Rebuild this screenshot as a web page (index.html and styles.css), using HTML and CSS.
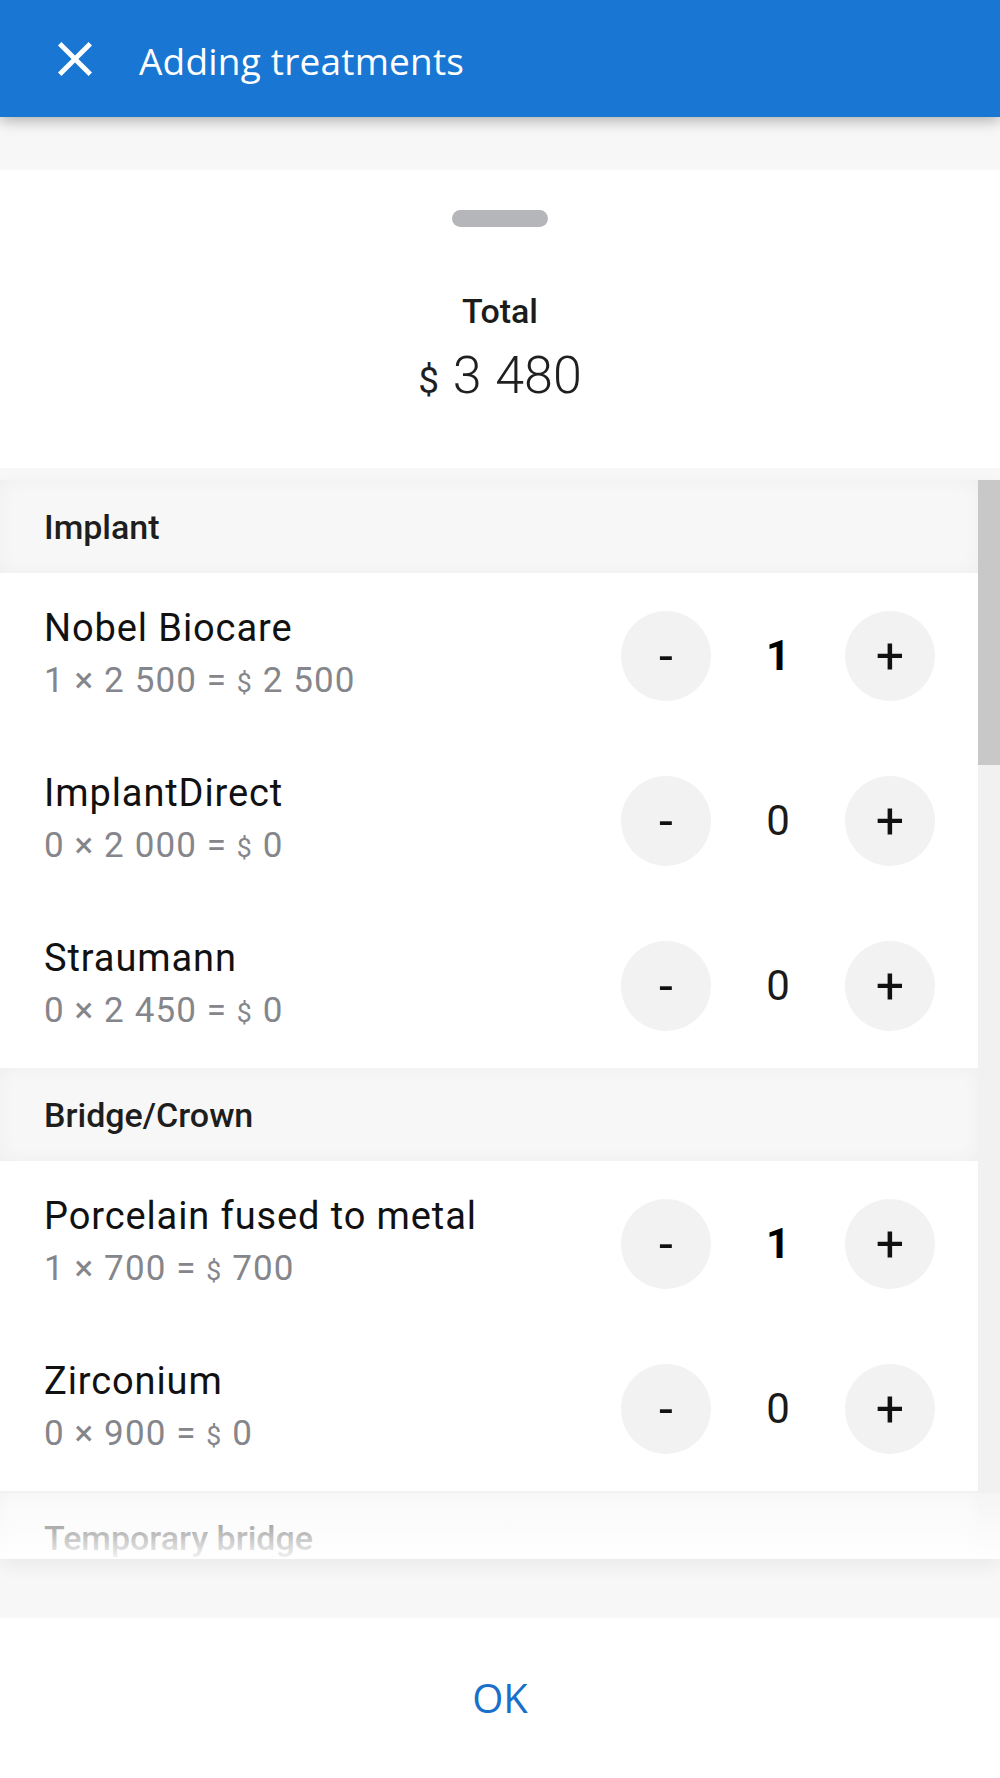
FILE: index.html
```html
<!DOCTYPE html>
<html lang="en">
<head>
<meta charset="utf-8">
<title>Adding treatments</title>
<link rel="stylesheet" href="styles.css">
</head>
<body>
<div class="app">
  <header class="topbar">
    <button class="close" aria-label="Close">
      <svg viewBox="5 5 14 14" width="34" height="34"><path fill="#fff" d="M19 6.41L17.59 5 12 10.59 6.41 5 5 6.41 10.59 12 5 17.59 6.41 19 12 13.41 17.59 19 19 17.59 13.41 12z"/></svg>
    </button>
    <h1 class="title">Adding treatments</h1>
  </header>

  <main class="content">
    <section class="sheet">
      <div class="handle"></div>
      <div class="total-label">Total</div>
      <div class="total-amount"><span class="cur">$</span> 3 480</div>
    </section>

    <div class="list-wrap">
      <div class="list">
        <div class="group-title">Implant</div>
        <div class="row">
          <div class="info">
            <div class="name">Nobel Biocare</div>
            <div class="calc">1 × 2 500 = <span class="cur">$</span> 2 500</div>
          </div>
          <div class="stepper">
            <button class="step">-</button>
            <span class="count active">1</span>
            <button class="step">+</button>
          </div>
        </div>
        <div class="row">
          <div class="info">
            <div class="name">ImplantDirect</div>
            <div class="calc">0 × 2 000 = <span class="cur">$</span> 0</div>
          </div>
          <div class="stepper">
            <button class="step">-</button>
            <span class="count">0</span>
            <button class="step">+</button>
          </div>
        </div>
        <div class="row">
          <div class="info">
            <div class="name">Straumann</div>
            <div class="calc">0 × 2 450 = <span class="cur">$</span> 0</div>
          </div>
          <div class="stepper">
            <button class="step">-</button>
            <span class="count">0</span>
            <button class="step">+</button>
          </div>
        </div>

        <div class="group-title">Bridge/Crown</div>
        <div class="row">
          <div class="info">
            <div class="name">Porcelain fused to metal</div>
            <div class="calc">1 × 700 = <span class="cur">$</span> 700</div>
          </div>
          <div class="stepper">
            <button class="step">-</button>
            <span class="count active">1</span>
            <button class="step">+</button>
          </div>
        </div>
        <div class="row">
          <div class="info">
            <div class="name">Zirconium</div>
            <div class="calc">0 × 900 = <span class="cur">$</span> 0</div>
          </div>
          <div class="stepper">
            <button class="step">-</button>
            <span class="count">0</span>
            <button class="step">+</button>
          </div>
        </div>

        <div class="group-title">Temporary bridge</div>
      </div>
      <div class="scrollbar"><div class="thumb"></div></div>
      <div class="fade"></div>
    </div>
  </main>

  <footer class="actions">
    <button class="ok">OK</button>
  </footer>
</div>
</body>
</html>
```

FILE: styles.css
```css
* { box-sizing: border-box; }

html, body {
  margin: 0;
  padding: 0;
}

body {
  width: 1000px;
  height: 1778px;
  overflow: hidden;
  background: #f7f7f7;
  font-family: Roboto, "Noto Sans", "Liberation Sans", sans-serif;
  color: #1a1a1a;
}

button {
  font: inherit;
  border: 0;
  background: none;
  padding: 0;
  margin: 0;
  color: inherit;
}

.app {
  display: flex;
  flex-direction: column;
  height: 1778px;
}

/* Top bar */
.topbar {
  position: relative;
  z-index: 2;
  height: 117px;
  flex: none;
  display: flex;
  align-items: center;
  padding: 0 0 0 58px;
  background: #1976d2;
  box-shadow: 0 3px 14px rgba(0, 0, 0, 0.32);
}

.close {
  width: 34px;
  height: 34px;
  display: flex;
}

.title {
  margin: 0 0 0 47px;
  padding-top: 3px;
  font-family: "Open Sans", "Noto Sans", sans-serif;
  font-weight: 400;
  font-size: 37px;
  letter-spacing: 0.2px;
  line-height: 49px;
  color: #fff;
}

/* Content */
.content {
  flex: none;
  display: flex;
  flex-direction: column;
  padding-top: 53px;
}

.sheet {
  height: 298px;
  flex: none;
  background: #fff;
  display: flex;
  flex-direction: column;
  align-items: center;
  padding-top: 40px;
}

.handle {
  width: 96px;
  height: 17px;
  border-radius: 9px;
  background: #b5b6ba;
}

.total-label {
  margin-top: 64px;
  font-size: 34px;
  line-height: 40px;
  font-weight: 500;
  color: #1c1c1c;
}

.total-amount {
  margin-top: 15px;
  font-size: 52px;
  line-height: 60px;
  font-weight: 300;
  color: #1f1f1f;
  word-spacing: 1px;
}

.total-amount .cur {
  font-size: 37px;
  font-weight: 400;
}

.cur {
  font-size: 0.76em;
}

/* List */
.list-wrap {
  position: relative;
  flex: none;
  display: flex;
  margin-top: 12px;
  height: 1079px;
  box-shadow: 0 8px 16px rgba(0, 0, 0, 0.05);
}

.list {
  flex: 1;
  height: 1079px;
  overflow: hidden;
  background: #fff;
}

.scrollbar {
  width: 22px;
  flex: none;
  background: #f1f1f1;
}

.thumb {
  height: 285px;
  background: #c8c8c8;
}

.group-title {
  height: 93px;
  display: flex;
  align-items: center;
  padding-left: 44px;
  background: #f7f7f7;
  box-shadow: inset 0 0 18px rgba(0, 0, 0, 0.04);
  font-size: 34px;
  font-weight: 500;
  color: #1e1e1e;
}

.row {
  height: 165px;
  display: flex;
  align-items: center;
  padding: 0 43px 0 44px;
  background: #fff;
}

.info {
  flex: 1;
  display: flex;
  flex-direction: column;
  gap: 6px;
}

.name {
  font-size: 38px;
  line-height: 47px;
  letter-spacing: 0.9px;
  color: #111;
}

.calc {
  font-size: 35px;
  line-height: 46px;
  letter-spacing: 1.1px;
  color: #85868b;
}

.stepper {
  display: flex;
  align-items: center;
}

.step {
  width: 90px;
  height: 90px;
  border-radius: 50%;
  background: #f2f2f2;
  display: flex;
  align-items: center;
  justify-content: center;
  font-family: Roboto, sans-serif;
  font-size: 50px;
  line-height: 1;
  color: #111;
}

.count {
  width: 134px;
  text-align: center;
  font-size: 42px;
  line-height: 50px;
  color: #1a1a1a;
}

.count.active {
  font-weight: 700;
  color: #000;
}

.fade {
  position: absolute;
  left: 0;
  right: 0;
  bottom: 0;
  height: 66px;
  background: linear-gradient(rgba(255, 255, 255, 0.3), rgba(255, 255, 255, 0.95));
}

/* Footer */
.actions {
  flex: none;
  margin-top: 59px;
  height: 160px;
  background: #fff;
  display: flex;
  align-items: center;
  justify-content: center;
}

.ok {
  font-family: "Open Sans", "Noto Sans", sans-serif;
  font-size: 40px;
  line-height: 160px;
  color: #1a6fcb;
  padding: 0 40px;
}
```
